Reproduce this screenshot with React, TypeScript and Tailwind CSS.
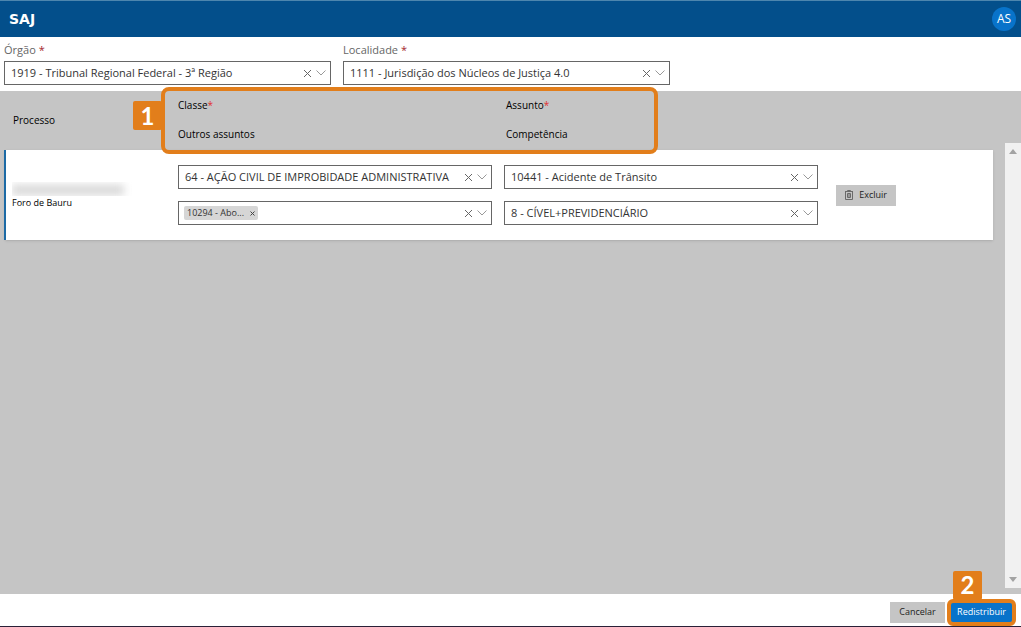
import { useState } from 'react';
import type { ReactNode } from 'react';

function ClearIcon() {
  return (
    <svg width="9" height="9" viewBox="0 0 9 9" fill="none" stroke="#666666" strokeWidth="1">
      <path d="M1 1l7 7M8 1l-7 7" />
    </svg>
  );
}

function ChevronIcon() {
  return (
    <svg width="10" height="6" viewBox="0 0 10 6" fill="none" stroke="#999999" strokeWidth="1">
      <path d="M0.5 0.5L5 5L9.5 0.5" />
    </svg>
  );
}

function TrashIcon() {
  return (
    <svg width="8" height="10" viewBox="0 0 8 10" fill="none" stroke="#6a6a6a" strokeWidth="1">
      <path d="M2.5 1.5V0.5h3v1M0 1.5h8M0.5 1.5v8h7v-8" />
      <path d="M2.5 3.5h3v4h-3zM4 3.5v4" />
    </svg>
  );
}

type ComboProps = {
  id: string;
  initial: string;
  label?: string;
  children?: ReactNode;
};

function Combo({ id, initial, label, children }: ComboProps) {
  const [value, setValue] = useState(initial);

  return (
    <div className="flex h-6 items-center border border-[#666666] bg-white pl-[6px] pr-1">
      {children}
      <select
        id={id}
        aria-label={label}
        value={value}
        onChange={(e) => setValue(e.target.value)}
        className="h-full min-w-0 flex-1 appearance-none bg-transparent text-[11px] text-[#333333] outline-none"
      >
        <option value="" />
        {initial && <option value={initial}>{initial}</option>}
      </select>
      <button type="button" aria-label="Limpar" onClick={() => setValue('')} className="mr-1">
        <ClearIcon />
      </button>
      <ChevronIcon />
    </div>
  );
}

function Chip() {
  const [visible, setVisible] = useState(true);
  if (!visible) return null;

  return (
    <span className="-ml-px flex h-[14px] shrink-0 items-center gap-[6px] rounded-xs bg-[#d6d6d6] px-[3px] text-[9px] text-[#333333]">
      10294 - Abo...
      <button type="button" aria-label="Remover" onClick={() => setVisible(false)}>
        <svg width="5" height="5" viewBox="0 0 5 5" fill="none" stroke="#444444" strokeWidth="1">
          <path d="M0.5 0.5l4 4M4.5 0.5l-4 4" />
        </svg>
      </button>
    </span>
  );
}

function Step({ children }: { children: ReactNode }) {
  return (
    <span className="flex h-[29px] w-[29px] items-center justify-center rounded-xs bg-[#e27e1b] font-['Lato',sans-serif] text-2xl font-bold text-white">
      {children}
    </span>
  );
}

export default function App() {
  return (
    <div className="flex min-h-screen flex-col border-b border-[#2a2038] bg-white font-['Open_Sans','Noto_Sans',sans-serif] text-[#333333]">
      {/* Top bar */}
      <header className="flex h-[37px] items-center justify-between border-t border-[#4d86ae] bg-[#034f8b] pl-[9px] pr-[5px]">
        <h1 className="font-['DejaVu_Sans',sans-serif] text-sm font-bold text-white">SAJ</h1>
        <button
          type="button"
          className="flex h-6 w-6 items-center justify-center rounded-full bg-[#0873ca] text-xs text-white"
        >
          AS
        </button>
      </header>

      {/* Filters */}
      <div className="grid grid-cols-3 gap-3 pb-[6px] pl-1 pr-3 pt-1">
        <div>
          <label htmlFor="orgao" className="block h-5 text-[11px] leading-[18px] text-[#666666]">
            Órgão <span className="text-[#a4262c]">*</span>
          </label>
          <Combo id="orgao" initial="1919 - Tribunal Regional Federal - 3ª Região" />
        </div>
        <div>
          <label htmlFor="localidade" className="block h-5 text-[11px] leading-[18px] text-[#666666]">
            Localidade <span className="text-[#a4262c]">*</span>
          </label>
          <Combo id="localidade" initial="1111 - Jurisdição dos Núcleos de Justiça 4.0" />
        </div>
      </div>

      {/* Processes */}
      <main className="relative flex flex-1 bg-[#c5c5c5]">
        <div className="flex-1 pl-1 pr-3">
          <table className="w-full table-fixed text-left">
            <colgroup>
              <col className="w-[173px]" />
              <col className="w-[33%]" />
              <col className="w-[33%]" />
              <col />
            </colgroup>
            <thead className="text-[10px] text-black">
              <tr className="h-[59px]">
                <th className="pl-2 font-normal">Processo</th>
                <th className="pb-[2px] font-normal">
                  <div className="flex flex-col gap-[14px] leading-[15px]">
                    <span>Classe<span className="text-[#e03030]">*</span></span>
                    <span>Outros assuntos</span>
                  </div>
                </th>
                <th className="pb-[2px] pl-[2px] font-normal">
                  <div className="flex flex-col gap-[14px] leading-[15px]">
                    <span>Assunto<span className="text-[#e03030]">*</span></span>
                    <span>Competência</span>
                  </div>
                </th>
                <td />
              </tr>
            </thead>
            <tbody>
              <tr className="bg-white shadow-sm">
                <td className="border-l-2 border-[#1d6aa5] pl-[6px] text-[9px] leading-3 text-black">
                  <div className="mb-px h-[14px] w-[120px] overflow-hidden">
                    <div className="mt-[3px] h-[10px] w-[112px] bg-[#d6d6d6] blur-xs" />
                  </div>
                  Foro de Bauru
                </td>
                <td className="py-[15px] pr-3">
                  <div className="flex flex-col gap-3">
                    <Combo id="classe" label="Classe" initial="64 - AÇÃO CIVIL DE IMPROBIDADE ADMINISTRATIVA" />
                    <Combo id="outros" label="Outros assuntos" initial="">
                      <Chip />
                    </Combo>
                  </div>
                </td>
                <td className="py-[15px] pr-3">
                  <div className="flex flex-col gap-3">
                    <Combo id="assunto" label="Assunto" initial="10441 - Acidente de Trânsito" />
                    <Combo id="competencia" label="Competência" initial="8 - CÍVEL+PREVIDENCIÁRIO" />
                  </div>
                </td>
                <td className="pl-[6px]">
                  <button
                    type="button"
                    className="flex h-[21px] w-[60px] items-center justify-center gap-[6px] bg-[#c5c5c5] text-[9px] text-[#222222]"
                  >
                    <TrashIcon />
                    Excluir
                  </button>
                </td>
              </tr>
            </tbody>
          </table>
        </div>

        {/* Scroll track */}
        <div className="mb-[6px] mt-[52px] flex w-4 flex-col items-center justify-between bg-[#f1f1f1] py-[6px]">
          <svg width="8" height="5" viewBox="0 0 8 5" fill="#a3a3a3">
            <path d="M0 5L4 0L8 5z" />
          </svg>
          <svg width="8" height="5" viewBox="0 0 8 5" fill="#a3a3a3">
            <path d="M0 0L4 5L8 0z" />
          </svg>
        </div>

        {/* First step highlight */}
        <div className="pointer-events-none absolute -top-1 left-[133px] flex items-start">
          <div className="pt-[14px]">
            <Step>1</Step>
          </div>
          <div className="-ml-px h-[67px] w-[497px] rounded-lg border-4 border-[#e27e1b]" />
        </div>
      </main>

      {/* Actions */}
      <footer className="flex h-8 items-center justify-end gap-[6px] pr-[9px] pt-1">
        <button type="button" className="h-[21px] w-[55px] bg-[#c5c5c5] text-[9px] text-[#222222]">
          Cancelar
        </button>
        <div className="relative">
          <button type="button" className="block h-[19px] w-[61px] bg-[#0873ca] text-[9px] text-white">
            Redistribuir
          </button>
          <div className="pointer-events-none absolute -inset-1 rounded-md border-4 border-[#e27e1b]" />
          <div className="pointer-events-none absolute bottom-full left-[2px] mb-[3px]">
            <Step>2</Step>
          </div>
        </div>
      </footer>
    </div>
  );
}
